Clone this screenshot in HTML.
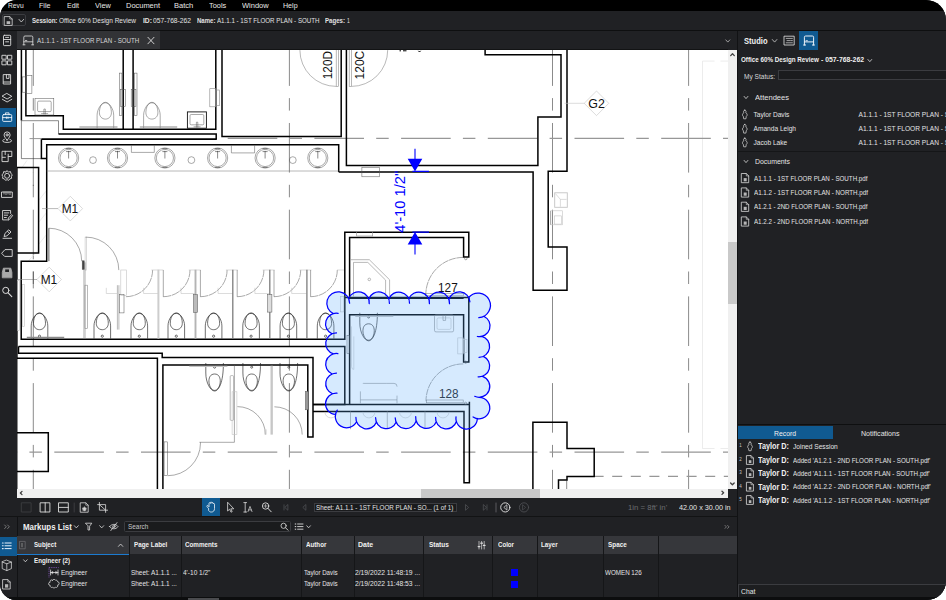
<!DOCTYPE html>
<html lang="en"><head><meta charset="utf-8"><title>Revu - A1.1.1 - 1ST FLOOR PLAN - SOUTH</title>
<style>
html,body{margin:0;padding:0;background:#fff}
body{width:946px;height:600px;overflow:hidden;font-family:"Liberation Sans",sans-serif}
#app{position:absolute;left:0;top:0;width:946px;height:600px;background:#202124;border-radius:17px 20px 19px 16px;overflow:hidden}
.a{position:absolute}
.t{position:absolute;white-space:nowrap;line-height:1;transform-origin:0 50%}
svg{position:absolute;overflow:visible}
</style></head><body><div id="app">
<!-- menu bar -->
<div class="a" style="left:0;top:0;width:946px;height:11px;background:#000"></div>
<!-- toolbar -->
<div class="a" style="left:0;top:11px;width:946px;height:19px;background:#202124"></div>
<div class="a" style="left:0;top:30px;width:946px;height:1.2px;background:#0e0f10"></div>
<div class="a" style="left:1.5px;top:14.2px;width:24.6px;height:12.2px;border:0.8px solid #3b3c40;border-radius:2px;box-sizing:border-box"></div>
<!-- tab bar -->
<div class="a" style="left:17px;top:31px;width:721px;height:18.6px;background:#202124"></div>
<div class="a" style="left:17px;top:30.9px;width:143.1px;height:18px;background:#323336"></div>
<div class="a" style="left:17px;top:48.6px;width:711px;height:1.2px;background:#121314"></div>
<!-- left sidebar -->
<div class="a" style="left:0;top:31px;width:17px;height:569px;background:#202124"></div>
<div class="a" style="left:0;top:108.3px;width:16.4px;height:19.2px;background:#105a91"></div>
<div class="a" style="left:0;top:536.6px;width:16.5px;height:19.3px;background:#105a91"></div>
<div class="a" style="left:16.6px;top:498px;width:0.8px;height:102px;background:#111214"></div>
<!-- drawing viewport -->
<div class="a" style="left:17px;top:49.6px;width:711px;height:439px;background:#fff;overflow:hidden">
<svg width="711" height="439" viewBox="17 49.6 711 439" style="left:0;top:0" font-family="Liberation Sans, sans-serif">
<defs><style>
.k{fill:none;stroke:#000;stroke-width:1.5;stroke-linejoin:miter}
.k2{fill:none;stroke:#000;stroke-width:2}
.m{fill:none;stroke:#111;stroke-width:0.9}
.n{fill:none;stroke:#2a2a2a;stroke-width:0.55}
.q{fill:none;stroke:#222;stroke-width:0.65}
.f{fill:none;stroke:#555;stroke-width:0.5}
.g{fill:none;stroke:#8a8a8a;stroke-width:0.6}
.l{fill:none;stroke:#c4c4c4;stroke-width:0.6}
.v{fill:none;stroke:#e4e4e4;stroke-width:0.7}
.b{fill:none;stroke:#0000ff;stroke-width:1.1}
</style></defs>
<path class="v" d="M702.5 60.7V448.1"/>
<path class="v" d="M702.5 60.7H728M702.5 448.1H728" stroke-dasharray="12 6"/>
<path class="n" d="M33.3 35.9V489" stroke-dasharray="49.6 12.2 12.5 12.4"/>
<path class="n" d="M289.4 35.9V489" stroke-dasharray="49.6 12.2 12.5 12.4"/>
<path class="n" d="M552.5 35.9V489" stroke-dasharray="49.6 12.2 12.5 12.4"/>
<path class="n" d="M688.6 35.9V489" stroke-dasharray="49.6 12.2 12.5 12.4"/>
<path class="n" d="M33.3 172V185.5"/>
<path class="g" d="M227.7 138H728" stroke-dasharray="49.6 12.2 12.5 12.4" style="stroke-width:1.25;stroke:#979797"/>
<path class="g" d="M-32.4 451.6H728" stroke-dasharray="49.6 12.2 12.5 12.4" style="stroke-width:1.25;stroke:#979797"/>
<path class="g" d="M593.6 475.9H728" stroke-dasharray="10 8.6" style="stroke-width:1.25;stroke:#979797"/>
<path class="g" d="M29.5 138.2H41.4" style="stroke-width:0.9"/>
<path class="v" d="M38.6 200L46.7 190M38.6 222L46.7 212M38.6 244L46.7 234M21.4 168L27 160M27 262L38 250"/>
<path class="k" d="M21.4 49V120.2"/>
<path class="n" d="M21.4 120.2V158.2H41.4M21.4 120.3H58.5V133.5"/>
<path class="k" d="M25.9 49V115.3H63.3V128.9H215.8V49M123.2 49V128.9M133.1 49V128.9"/>
<path class="k" d="M58.5 133.5H216.2V138.9"/>
<path class="k2" d="M216.8 138.7H41.4" style="stroke-width:1.8"/>
<path class="k" d="M41.4 138.9V158.2H46.6"/>
<path class="k" d="M338.7 171.5V144.3H46.7V260.8H21.2V338.8H344.8V231.9H468.8V256.6H463.6V237.1H349.6V297.9H463.6"/>
<path class="k" d="M16.9 167H38.6V252.5H16.9M16.9 167V358"/>
<path class="k" d="M222 49V136H341.2V49"/>
<path class="k" d="M338.7 171.5H533.1V289.9H567V246.6H548.2V170.9H567V49"/>
<path class="k" d="M346.4 49V165.2H537.9V116.6H561V54.3H485.1V49"/>
<path class="k" d="M344.8 297.2H468.8V361.6H463.6V314.4H349.6V403.6"/>
<path class="k" d="M18.5 346.1H344.8V404.2H313M18.5 346.1V352.9H162.2V357H313V436.5H307.8V364.6H162.9V489"/>
<path class="k" d="M16.9 357.9H157.4V489"/>
<path class="k" d="M313 404.2H469.4V482.3H464V411H313M469.4 401.3V404.2"/>
<path class="k" d="M16.9 432.4H48.3V471.1H16.9M16.7 358V489"/>
<path class="k" d="M532.9 489V421.9H567V448H594.2V476.1H567V479.5H558.5V489"/>
<path class="n" d="M566.7 479.5V489"/>
<path class="k" d="M399.5 50.4H401M403 50.4H406.5M418.4 50.4L419.5 51.6L420.6 50.4" style="stroke-width:1"/>
<rect class="f" x="22.3" y="76.5" width="3.6" height="15.3"/>
<rect class="f" x="25.9" y="75.3" width="6.0" height="17.7"/>
<rect class="f" x="35.0" y="98.1" width="18.8" height="16.5"/>
<rect class="f" x="37.6" y="100.7" width="13.6" height="10.5" rx="1.2"/>
<path class="f" d="M43.9 114.0V108.6H45.3V114.0M41.1 113.2H48.1"/>
<path class="f" d="M97.1 127.8V114.9C97.1 108.4 101.8 101.9 105.4 101.9C109.0 101.9 113.7 108.4 113.7 114.9V127.8"/>
<path class="f" d="M105.4 102.4C100.4 102.4 99.4 108.9 99.4 112.4C99.4 115.9 101.9 118.7 105.4 118.7C108.9 118.7 111.4 115.9 111.4 112.4C111.4 108.9 110.4 102.4 105.4 102.4Z"/>
<path class="g" d="M79.4 126.6H117.5" style="stroke-width:1.2"/>
<path class="f" d="M143.6 127.8V114.9C143.6 108.4 148.3 101.9 151.9 101.9C155.5 101.9 160.2 108.4 160.2 114.9V127.8"/>
<path class="f" d="M151.9 102.4C146.9 102.4 145.9 108.9 145.9 112.4C145.9 115.9 148.4 118.7 151.9 118.7C155.4 118.7 157.9 115.9 157.9 112.4C157.9 108.9 156.9 102.4 151.9 102.4Z"/>
<path class="g" d="M139.8 126.6H177.2" style="stroke-width:1.2"/>
<rect class="f" x="119.4" y="72.7" width="2.5" height="42.5"/>
<rect class="f" x="120.6" y="89.2" width="4.7" height="17.1"/>
<rect class="f" x="134.5" y="72.7" width="2.5" height="42.5"/>
<rect class="f" x="131.2" y="89.2" width="4.7" height="17.1"/>
<rect class="m" x="187.4" y="111.5" width="19.0" height="16.3"/>
<rect class="f" x="190.0" y="114.1" width="13.8" height="10.3" rx="1.2"/>
<path class="f" d="M196.4 127.2V121.8H197.8V127.2M193.6 126.4H200.6"/>
<rect class="g" x="209.8" y="88.3" width="5.9" height="18.1"/>
<rect class="g" x="215.7" y="89.6" width="3.8" height="15.7"/>
<circle class="f" cx="68.6" cy="157.6" r="10.1"/>
<circle class="f" cx="68.6" cy="157.6" r="8.6"/>
<path class="n" d="M68.6 150.4V158.1M66.1 151.2H71.1"/>
<path class="n" d="M66.1 167.0H71.1M66.1 148.2H71.1"/>
<circle class="f" cx="117.5" cy="157.6" r="10.1"/>
<circle class="f" cx="117.5" cy="157.6" r="8.6"/>
<path class="n" d="M117.5 150.4V158.1M115.0 151.2H120.0"/>
<path class="n" d="M115.0 167.0H120.0M115.0 148.2H120.0"/>
<circle class="f" cx="164.9" cy="157.6" r="10.1"/>
<circle class="f" cx="164.9" cy="157.6" r="8.6"/>
<path class="n" d="M164.9 150.4V158.1M162.4 151.2H167.4"/>
<path class="n" d="M162.4 167.0H167.4M162.4 148.2H167.4"/>
<circle class="f" cx="217.6" cy="157.6" r="10.1"/>
<circle class="f" cx="217.6" cy="157.6" r="8.6"/>
<path class="n" d="M217.6 150.4V158.1M215.1 151.2H220.1"/>
<path class="n" d="M215.1 167.0H220.1M215.1 148.2H220.1"/>
<circle class="f" cx="265.1" cy="157.6" r="10.1"/>
<circle class="f" cx="265.1" cy="157.6" r="8.6"/>
<path class="n" d="M265.1 150.4V158.1M262.6 151.2H267.6"/>
<path class="n" d="M262.6 167.0H267.6M262.6 148.2H267.6"/>
<circle class="f" cx="317.8" cy="157.6" r="10.1"/>
<circle class="f" cx="317.8" cy="157.6" r="8.6"/>
<path class="n" d="M317.8 150.4V158.1M315.3 151.2H320.3"/>
<path class="n" d="M315.3 167.0H320.3M315.3 148.2H320.3"/>
<circle class="f" cx="93.0" cy="159.7" r="3.4"/>
<circle class="f" cx="191.4" cy="159.7" r="3.4"/>
<circle class="f" cx="292.8" cy="159.7" r="3.4"/>
<path class="g" d="M46.7 170.6H338.7" style="stroke:#7d7d7d;stroke-width:0.55"/>
<path class="f" d="M131.4 145V152H154.3V145"/>
<path class="f" d="M231.4 145V152.5H254.6V145"/>
<rect class="f" x="361.9" y="167.3" width="17.5" height="9.1"/>
<rect class="g" x="356.7" y="230.9" width="16.0" height="4.7"/>
<rect class="g" x="336.2" y="49.0" width="2.3" height="37.0"/>
<rect class="g" x="349.2" y="49.0" width="2.2" height="37.0"/>
<path class="g" d="M336.2 86A36.3 36.3 0 0 1 299.9 49.7M351.4 86A36.3 36.3 0 0 0 387.7 49.7"/>
<text x="0.0" y="0.0" font-size="12" fill="#111" transform="translate(332.1 78.8) rotate(-90)" textLength="28.2" lengthAdjust="spacingAndGlyphs">120D</text>
<text x="0.0" y="0.0" font-size="12" fill="#111" transform="translate(363.8 79) rotate(-90)" textLength="28.6" lengthAdjust="spacingAndGlyphs">120C</text>
<path class="l" d="M584.2 102.9L596.5 90.6L608.8 102.9L596.5 115.2Z"/>
<path class="l" d="M564.5 102.9H584.4"/>
<text x="588.3" y="107.6" font-size="12.4" fill="#111" textLength="16.5" lengthAdjust="spacingAndGlyphs">G2</text>
<path class="l" d="M58.0 208.2L70.3 195.9L82.6 208.2L70.3 220.5Z"/>
<path class="g" d="M42.0 208.2H57.9"/>
<text x="61.7" y="212.7" font-size="12.4" fill="#111" textLength="16.5" lengthAdjust="spacingAndGlyphs">M1</text>
<path class="l" d="M36.9 279.1L49.2 266.8L61.5 279.1L49.2 291.4Z"/>
<path class="g" d="M16.0 279.1H37.0"/>
<text x="40.7" y="283.6" font-size="12.4" fill="#111" textLength="16.5" lengthAdjust="spacingAndGlyphs">M1</text>
<path class="n" d="M33.3 271V288"/>
<path class="g" d="M48.7 227.9V260.8" style="stroke-width:1.8;stroke:#9a9a9a"/>
<path class="f" d="M48.7 227.8A33 33 0 0 1 81.7 260.8"/>
<rect class="l" x="85.1" y="236.7" width="1.3" height="33.0"/>
<path class="f" d="M85.8 236.7A33 33 0 0 1 118.8 269.7"/>
<path class="g" d="M83.9 262V338.5M85.1 262V338.5"/>
<rect class="f" x="82.2" y="260.4" width="2.0" height="8.6" style="fill:#444"/>
<rect class="g" x="84.9" y="284.8" width="2.4" height="43.2"/>
<rect class="l" x="120.8" y="269.6" width="5.7" height="25.4"/>
<rect class="f" x="119.5" y="294.3" width="4.5" height="18.2"/>
<path class="g" d="M117.4 284.8V329.2M118.9 284.8V329.2"/>
<path class="l" d="M106.3 287.4V293.1H118.1"/>
<path class="f" d="M125.9 296.3A26.7 26.7 0 0 0 152.6 269.6" stroke-dasharray="8 0.6"/>
<path class="l" d="M151.4 269.6H163.3"/>
<path class="l" d="M143.6 287.4V293.1H158.4"/>
<path class="f" d="M163.3 269.6V296.4"/>
<path class="f" d="M163.3 296.3A26.7 26.7 0 0 0 190.0 269.6" stroke-dasharray="8 0.6"/>
<path class="l" d="M188.8 269.6H200.7"/>
<path class="l" d="M181.0 287.4V293.1H195.8"/>
<path class="f" d="M200.4 269.6V296.4"/>
<path class="f" d="M200.4 296.3A26.7 26.7 0 0 0 227.1 269.6" stroke-dasharray="8 0.6"/>
<path class="l" d="M225.9 269.6H237.8"/>
<path class="l" d="M218.1 287.4V293.1H232.9"/>
<path class="f" d="M237.2 269.6V296.4"/>
<path class="f" d="M237.2 296.3A26.7 26.7 0 0 0 263.9 269.6" stroke-dasharray="8 0.6"/>
<path class="l" d="M262.7 269.6H274.6"/>
<path class="l" d="M254.9 287.4V293.1H269.7"/>
<path class="f" d="M274.0 269.6V296.4"/>
<path class="f" d="M274.0 296.3A26.7 26.7 0 0 0 300.7 269.6" stroke-dasharray="8 0.6"/>
<path class="l" d="M299.5 269.6H311.4"/>
<path class="l" d="M291.7 287.4V293.1H306.5"/>
<path class="f" d="M310.6 269.6V296.4"/>
<path class="f" d="M310.6 296.3A26.7 26.7 0 0 0 337.3 269.6" stroke-dasharray="8 0.6"/>
<path class="l" d="M337 269.6H344"/>
<path class="g" d="M158.4 269.3V338.2" style="stroke:#cdcdcd;stroke-width:2"/>
<path class="g" d="M195.5 269.3V338.2" style="stroke:#b4b4b4;stroke-width:1.9"/>
<path class="g" d="M232.8 269.3V338.2" style="stroke:#7c7c7c;stroke-width:1.3"/>
<path class="g" d="M269.8 269.3V338.2" style="stroke:#7c7c7c;stroke-width:1.3"/>
<path class="g" d="M306.9 269.3V338.2" style="stroke:#7c7c7c;stroke-width:1.3"/>
<rect class="f" x="193.5" y="294.3" width="4.1" height="17.8" style="fill:#bbb"/>
<rect class="f" x="267.6" y="294.3" width="4.3" height="17.4" style="fill:#ddd"/>
<path class="q" d="M31.2 338.2V325.5C31.2 319.0 35.9 312.5 39.5 312.5C43.1 312.5 47.8 319.0 47.8 325.5V338.2"/>
<path class="q" d="M39.5 313.0C34.5 313.0 33.5 319.5 33.5 323.0C33.5 326.5 36.0 329.3 39.5 329.3C43.0 329.3 45.5 326.5 45.5 323.0C45.5 319.5 44.5 313.0 39.5 313.0Z"/>
<circle class="q" cx="39.5" cy="335.8" r="1.1"/>
<path class="q" d="M94.0 338.2V325.5C94.0 319.0 98.7 312.5 102.3 312.5C105.9 312.5 110.6 319.0 110.6 325.5V338.2"/>
<path class="q" d="M102.3 313.0C97.3 313.0 96.3 319.5 96.3 323.0C96.3 326.5 98.8 329.3 102.3 329.3C105.8 329.3 108.3 326.5 108.3 323.0C108.3 319.5 107.3 313.0 102.3 313.0Z"/>
<circle class="q" cx="102.3" cy="335.8" r="1.1"/>
<path class="q" d="M131.0 338.2V325.5C131.0 319.0 135.7 312.5 139.3 312.5C142.9 312.5 147.6 319.0 147.6 325.5V338.2"/>
<path class="q" d="M139.3 313.0C134.3 313.0 133.3 319.5 133.3 323.0C133.3 326.5 135.8 329.3 139.3 329.3C142.8 329.3 145.3 326.5 145.3 323.0C145.3 319.5 144.3 313.0 139.3 313.0Z"/>
<circle class="q" cx="139.3" cy="335.8" r="1.1"/>
<path class="q" d="M168.0 338.2V325.5C168.0 319.0 172.7 312.5 176.3 312.5C179.9 312.5 184.6 319.0 184.6 325.5V338.2"/>
<path class="q" d="M176.3 313.0C171.3 313.0 170.3 319.5 170.3 323.0C170.3 326.5 172.8 329.3 176.3 329.3C179.8 329.3 182.3 326.5 182.3 323.0C182.3 319.5 181.3 313.0 176.3 313.0Z"/>
<circle class="q" cx="176.3" cy="335.8" r="1.1"/>
<path class="q" d="M205.3 338.2V325.5C205.3 319.0 210.0 312.5 213.6 312.5C217.2 312.5 221.9 319.0 221.9 325.5V338.2"/>
<path class="q" d="M213.6 313.0C208.6 313.0 207.6 319.5 207.6 323.0C207.6 326.5 210.1 329.3 213.6 329.3C217.1 329.3 219.6 326.5 219.6 323.0C219.6 319.5 218.6 313.0 213.6 313.0Z"/>
<circle class="q" cx="213.6" cy="335.8" r="1.1"/>
<path class="q" d="M242.8 338.2V325.5C242.8 319.0 247.5 312.5 251.1 312.5C254.7 312.5 259.4 319.0 259.4 325.5V338.2"/>
<path class="q" d="M251.1 313.0C246.1 313.0 245.1 319.5 245.1 323.0C245.1 326.5 247.6 329.3 251.1 329.3C254.6 329.3 257.1 326.5 257.1 323.0C257.1 319.5 256.1 313.0 251.1 313.0Z"/>
<circle class="q" cx="251.1" cy="335.8" r="1.1"/>
<path class="q" d="M280.1 338.2V325.5C280.1 319.0 284.8 312.5 288.4 312.5C292.0 312.5 296.7 319.0 296.7 325.5V338.2"/>
<path class="q" d="M288.4 313.0C283.4 313.0 282.4 319.5 282.4 323.0C282.4 326.5 284.9 329.3 288.4 329.3C291.9 329.3 294.4 326.5 294.4 323.0C294.4 319.5 293.4 313.0 288.4 313.0Z"/>
<circle class="q" cx="288.4" cy="335.8" r="1.1"/>
<path class="q" d="M317.3 338.2V325.5C317.3 319.0 322.0 312.5 325.6 312.5C329.2 312.5 333.9 319.0 333.9 325.5V338.2"/>
<path class="q" d="M325.6 313.0C320.6 313.0 319.6 319.5 319.6 323.0C319.6 326.5 322.1 329.3 325.6 329.3C329.1 329.3 331.6 326.5 331.6 323.0C331.6 319.5 330.6 313.0 325.6 313.0Z"/>
<circle class="q" cx="325.6" cy="335.8" r="1.1"/>
<path class="g" d="M26.8 337H64.2" style="stroke-width:1.3"/>
<rect class="l" x="17.5" y="280.0" width="2.0" height="50.0"/>
<rect class="l" x="22.5" y="284.0" width="2.0" height="42.0"/>
<path class="g" d="M350.8 259.3H369.3L389.6 279.4V296M353.5 296V262H367.8L385.6 279.7V296"/>
<circle class="g" cx="369.3" cy="279.0" r="1.3"/>
<circle class="f" cx="465.8" cy="258.2" r="1.2"/>
<path class="f" d="M463.3 257A37.5 37.5 0 0 0 425.8 294.5" stroke-dasharray="7 0.6"/>
<rect class="g" x="425.5" y="293.0" width="37.8" height="2.4"/>
<text x="438.1" y="291.3" font-size="12" fill="#111" textLength="19.6" lengthAdjust="spacingAndGlyphs">127</text>
<path class="q" d="M205.8 362.6V372.6C205.8 382.6 210.6 390.6 214.6 390.6C218.6 390.6 223.4 382.6 223.4 362.6"/>
<path class="q" d="M214.6 373.6C205.6 373.6 208.6 390.0 214.6 390.0C220.6 390.0 223.6 373.6 214.6 373.6Z"/>
<circle class="q" cx="214.6" cy="366.8" r="1.0"/>
<path class="q" d="M242.9 362.6V372.6C242.9 382.6 247.7 390.6 251.7 390.6C255.7 390.6 260.5 382.6 260.5 362.6"/>
<path class="q" d="M251.7 373.6C242.7 373.6 245.7 390.0 251.7 390.0C257.7 390.0 260.7 373.6 251.7 373.6Z"/>
<circle class="q" cx="251.7" cy="366.8" r="1.0"/>
<path class="q" d="M280.0 362.6V372.6C280.0 382.6 284.8 390.6 288.8 390.6C292.8 390.6 297.6 382.6 297.6 362.6"/>
<path class="q" d="M288.8 373.6C279.8 373.6 282.8 390.0 288.8 390.0C294.8 390.0 297.8 373.6 288.8 373.6Z"/>
<circle class="q" cx="288.8" cy="366.8" r="1.0"/>
<path class="l" d="M189.3 366H227.4" style="stroke-width:1.2"/>
<path class="f" d="M234.4 364.6V441.9H199.4"/>
<path class="g" d="M271.1 364.6V434.2M272.2 364.6V434.2"/>
<rect class="g" x="230.2" y="375.2" width="3.4" height="44.8" rx="1"/>
<rect class="l" x="232.1" y="391.4" width="4.8" height="42.8"/>
<path class="f" d="M237.4 406.2A28 28 0 0 1 265.4 434.2M274.4 406.4A27.8 27.8 0 0 1 302.2 434.2"/>
<path class="l" d="M265 429V434.2M266.2 429V434.2"/>
<rect class="f" x="305.4" y="391.0" width="2.8" height="18.4" style="fill:#999"/>
<rect class="f" x="164.1" y="441.5" width="3.6" height="33.8"/>
<path class="f" d="M167.7 475.3A32.8 32.8 0 0 0 200.5 442.5V441.9"/>
<path class="g" d="M350.5 411V428.8"/>
<path class="g" d="M387.3 411V428.8"/>
<path class="g" d="M425 411V428.8"/>
<path class="l" d="M324.9 411.5A6 6 0 0 0 336.9 411.5"/>
<path class="l" d="M362.9 411.5A6 6 0 0 0 374.9 411.5"/>
<path class="l" d="M399.5 411.5A6 6 0 0 0 411.5 411.5"/>
<path class="l" d="M437 411.5A6 6 0 0 0 449 411.5"/>
<path class="q" d="M359.8 312.4V322.4C359.8 332.4 364.6 340.4 368.6 340.4C372.6 340.4 377.4 332.4 377.4 312.4"/>
<path class="q" d="M368.6 323.4C359.6 323.4 362.6 339.8 368.6 339.8C374.6 339.8 377.6 323.4 368.6 323.4Z"/>
<circle class="q" cx="368.6" cy="316.6" r="1.0"/>
<path class="l" d="M355.3 316H393.3" style="stroke-width:1.2"/>
<rect class="f" x="347.0" y="335.3" width="2.2" height="17.7"/>
<path class="l" d="M351.5 326V366Q351.5 369 353.8 369V336"/>
<rect class="l" x="340.6" y="296.0" width="3.2" height="15.5"/>
<rect class="g" x="434.5" y="314.5" width="19.1" height="17.0" rx="1.5"/>
<rect class="l" x="437.0" y="317.5" width="14.0" height="11.5" rx="1.5"/>
<path class="g" d="M443 315V320H445.6V315"/>
<rect class="l" x="457.8" y="337.5" width="5.7" height="16.0"/>
<rect class="l" x="463.5" y="339.0" width="3.5" height="13.0"/>
<path class="f" d="M463.3 363.5A37.3 37.3 0 0 0 426 400.8" stroke-dasharray="7 0.6"/>
<rect class="g" x="426.4" y="399.6" width="36.8" height="2.8"/>
<circle class="f" cx="465.6" cy="361.8" r="1.2"/>
<circle class="f" cx="465.6" cy="403.0" r="1.2"/>
<text x="439.0" y="397.2" font-size="12" fill="#222" textLength="19.6" lengthAdjust="spacingAndGlyphs">128</text>
<path class="g" d="M360.4 403V386A3 3 0 0 1 363.4 383H394A3 3 0 0 1 397 386V403" stroke-dasharray="12 9 24 0"/>
<path class="g" d="M360.4 399.5H397"/>
<rect class="l" x="554.7" y="192.4" width="12.6" height="14.5" style="stroke-width:0.9"/>
<path class="l" d="M555.4 193.2L560.4 199H566.6M560.4 199V206.3"/>
<rect class="l" x="550.9" y="210.4" width="11.4" height="14.0"/>
<rect class="l" x="554.6" y="215.5" width="7.0" height="8.2"/>
<path class="g" d="M550.5 210.4V224.4"/>
<path class="b" d="M415 148.3V160M415 254.2V243M412.4 171H429M412.4 231.7H429"/>
<path d="M407.7 158.3H422.3L415 171ZM407.7 244.2H422.3L415 231.7Z" fill="#0000ff"/>
<text x="0.0" y="0.0" font-size="14.2" fill="#0000ff" transform="translate(405 232.4) rotate(-90)" textLength="62" lengthAdjust="spacingAndGlyphs">4'-10 1/2"</text>
<path d="M336.4 302.3H479.1V417.5H336.4ZM326.8 302.8A11.4 11.4 0 1 1 349.6 302.8A11.4 11.4 0 1 1 326.8 302.8ZM347.8 302.3A10.7 10.7 0 1 1 369.2 302.3A10.7 10.7 0 1 1 347.8 302.3ZM368.0 302.3A10.7 10.7 0 1 1 389.4 302.3A10.7 10.7 0 1 1 368.0 302.3ZM388.1 302.3A10.7 10.7 0 1 1 409.5 302.3A10.7 10.7 0 1 1 388.1 302.3ZM408.0 302.3A10.7 10.7 0 1 1 429.4 302.3A10.7 10.7 0 1 1 408.0 302.3ZM428.2 302.3A10.7 10.7 0 1 1 449.6 302.3A10.7 10.7 0 1 1 428.2 302.3ZM448.5 302.3A10.7 10.7 0 1 1 469.9 302.3A10.7 10.7 0 1 1 448.5 302.3ZM465.8 304.9A12.3 12.3 0 1 1 490.4 304.9A12.3 12.3 0 1 1 465.8 304.9ZM468.4 325.5A10.7 10.7 0 1 1 489.8 325.5A10.7 10.7 0 1 1 468.4 325.5ZM468.4 346.2A10.7 10.7 0 1 1 489.8 346.2A10.7 10.7 0 1 1 468.4 346.2ZM468.4 365.8A10.7 10.7 0 1 1 489.8 365.8A10.7 10.7 0 1 1 468.4 365.8ZM468.4 386.1A10.7 10.7 0 1 1 489.8 386.1A10.7 10.7 0 1 1 468.4 386.1ZM468.4 407.6A10.7 10.7 0 1 1 489.8 407.6A10.7 10.7 0 1 1 468.4 407.6ZM455.9 417.5A10.7 10.7 0 1 1 477.3 417.5A10.7 10.7 0 1 1 455.9 417.5ZM435.6 417.5A10.7 10.7 0 1 1 457.0 417.5A10.7 10.7 0 1 1 435.6 417.5ZM415.6 417.5A10.7 10.7 0 1 1 437.0 417.5A10.7 10.7 0 1 1 415.6 417.5ZM395.2 417.5A10.7 10.7 0 1 1 416.6 417.5A10.7 10.7 0 1 1 395.2 417.5ZM375.6 417.5A10.7 10.7 0 1 1 397.0 417.5A10.7 10.7 0 1 1 375.6 417.5ZM355.9 417.5A10.7 10.7 0 1 1 377.3 417.5A10.7 10.7 0 1 1 355.9 417.5ZM335.3 416.2A11.3 11.3 0 1 1 357.9 416.2A11.3 11.3 0 1 1 335.3 416.2ZM325.7 403.4A10.7 10.7 0 1 1 347.1 403.4A10.7 10.7 0 1 1 325.7 403.4ZM325.7 383.4A10.7 10.7 0 1 1 347.1 383.4A10.7 10.7 0 1 1 325.7 383.4ZM325.7 363.8A10.7 10.7 0 1 1 347.1 363.8A10.7 10.7 0 1 1 325.7 363.8ZM325.7 343.2A10.7 10.7 0 1 1 347.1 343.2A10.7 10.7 0 1 1 325.7 343.2ZM325.7 323.6A10.7 10.7 0 1 1 347.1 323.6A10.7 10.7 0 1 1 325.7 323.6Z" fill="rgba(91,171,251,0.25)" fill-rule="nonzero"/>
<path d="M333.7 313.3A11.4 11.4 0 1 1 349.6 302.8M348.6 298.2A10.7 10.7 0 0 1 369.2 303.2M368.6 298.8A10.7 10.7 0 0 1 389.4 303.0M388.8 298.6A10.7 10.7 0 0 1 409.5 302.8M408.8 298.4A10.7 10.7 0 0 1 429.4 303.2M428.8 298.8A10.7 10.7 0 0 1 449.5 303.3M449.0 298.9A10.7 10.7 0 0 1 469.9 301.4M468.6 297.1A12.3 12.3 0 1 1 478.8 317.2M483.7 315.8A10.7 10.7 0 0 1 477.4 336.1M481.8 335.9A10.7 10.7 0 0 1 479.0 356.9M483.4 356.0A10.7 10.7 0 0 1 478.1 376.4M482.5 376.0A10.7 10.7 0 1 1 474.7 395.9M479.1 396.9A10.7 10.7 0 1 1 473.1 416.5M477.3 418.1A10.7 10.7 0 1 1 456.0 416.5M456.5 420.9A10.7 10.7 0 0 1 435.6 416.9M436.3 421.3A10.7 10.7 0 0 1 415.7 416.3M416.1 420.7A10.7 10.7 0 0 1 395.2 417.4M396.1 421.8A10.7 10.7 0 0 1 375.6 417.3M376.5 421.7A10.7 10.7 0 0 1 355.9 417.0M356.6 421.4A11.3 11.3 0 1 1 337.3 409.7M335.5 414.1A10.7 10.7 0 0 1 337.0 392.7M332.6 393.4A10.7 10.7 0 0 1 336.5 372.7M332.1 373.6A10.7 10.7 0 0 1 337.9 353.2M333.5 353.5A10.7 10.7 0 0 1 336.5 332.5M332.1 333.4A10.7 10.7 0 0 1 338.1 313.0" fill="none" stroke="#0000ff" stroke-width="1.25" stroke-linecap="round"/>
</svg>
</div>
<!-- scrollbars -->
<div class="a" style="left:728px;top:49.6px;width:10px;height:439px;background:#f0f0f0"></div>
<div class="a" style="left:728px;top:242.3px;width:9.4px;height:61.3px;background:#c9c9c9"></div>
<div class="a" style="left:17px;top:488.6px;width:721px;height:9.2px;background:#f0f0f0"></div>
<div class="a" style="left:420.8px;top:489.4px;width:119.2px;height:8.4px;background:#c9c9c9"></div>
<div class="a" style="left:728px;top:488.6px;width:9.4px;height:9.2px;background:#202124"></div>
<!-- bottom toolbar -->
<div class="a" style="left:17px;top:497.8px;width:721px;height:18.6px;background:#202124"></div>
<div class="a" style="left:202.2px;top:498.2px;width:18px;height:18.2px;background:#105a91"></div>
<div class="a" style="left:0;top:516.4px;width:738px;height:1px;background:#121314"></div>
<div class="a" style="left:314px;top:502.8px;width:142.8px;height:9.4px;border:0.7px solid #3b3c40;box-sizing:border-box;background:#1a1b1d"></div>
<!-- markups header row -->
<div class="a" style="left:124.4px;top:521px;width:167px;height:10.6px;border:0.7px solid #3b3c40;border-radius:1.5px;box-sizing:border-box;background:#1a1b1d"></div>
<!-- table header -->
<div class="a" style="left:17.4px;top:536px;width:720.6px;height:18.4px;background:#36373b"></div>
<div class="a" style="left:17.4px;top:553.6px;width:111.6px;height:1.2px;background:#1c7bd0"></div>
<div class="a" style="left:129px;top:536px;width:0.9px;height:64px;background:#151618"></div>
<div class="a" style="left:180.5px;top:536px;width:0.9px;height:64px;background:#151618"></div>
<div class="a" style="left:301px;top:536px;width:0.9px;height:64px;background:#151618"></div>
<div class="a" style="left:353.8px;top:536px;width:0.9px;height:64px;background:#151618"></div>
<div class="a" style="left:423.4px;top:536px;width:0.9px;height:64px;background:#151618"></div>
<div class="a" style="left:492.2px;top:536px;width:0.9px;height:64px;background:#151618"></div>
<div class="a" style="left:536.8px;top:536px;width:0.9px;height:64px;background:#151618"></div>
<div class="a" style="left:603.3px;top:536px;width:0.9px;height:64px;background:#151618"></div>
<div class="a" style="left:658.4px;top:536px;width:0.9px;height:64px;background:#151618"></div>
<div class="a" style="left:510.8px;top:568.8px;width:7px;height:7px;background:#0000ff"></div>
<div class="a" style="left:510.8px;top:580.5px;width:7px;height:7px;background:#0000ff"></div>
<!-- right panel -->
<div class="a" style="left:738px;top:31px;width:208px;height:569px;background:#202124"></div>
<div class="a" style="left:737.4px;top:31px;width:0.9px;height:569px;background:#111214"></div>
<div class="a" style="left:799.2px;top:31.2px;width:19.2px;height:19.2px;background:#105a91"></div>
<div class="a" style="left:778px;top:70.2px;width:180px;height:9.8px;border:0.7px solid #3b3c40;box-sizing:border-box;background:#1b1c1e"></div>
<div class="a" style="left:738px;top:151px;width:208px;height:1px;background:#151618"></div>
<div class="a" style="left:738px;top:423.6px;width:208px;height:1.2px;background:#0e0f10"></div>
<div class="a" style="left:738px;top:426px;width:95px;height:13.4px;background:#105a91"></div>
<div class="a" style="left:738px;top:584.3px;width:208px;height:13px;background:#1d1e20;border-top:0.8px solid #3b3c40;border-left:0.8px solid #3b3c40;box-sizing:border-box"></div>
<!-- bottom strip -->
<div class="a" style="left:0;top:597.4px;width:946px;height:3px;background:#0c0d0e"></div>
<div class="a" style="left:188px;top:597.6px;width:31px;height:2.4px;background:#4a4b4e"></div>
<svg width="946" height="600" viewBox="0 0 946 600" style="left:0;top:0;pointer-events:none" fill="none" stroke="#dcdcdc" stroke-width="0.9" stroke-linecap="round" stroke-linejoin="round">
<path d="M4.6 16.6H9.8L12.2 19.0V25.4H4.6Z" stroke="#dcdcdc" stroke-width="0.8"/>
<path d="M9.8 16.6V19.0H12.2" stroke="#dcdcdc" stroke-width="0.6"/>
<rect x="6.6" y="21.2" width="3.6" height="2.8" fill="#dcdcdc" stroke="none" opacity="0.8"/>
<path d="M19.0 19.4L21.3 22.0L23.6 19.4" stroke="#dcdcdc" stroke-width="0.8"/>
<path d="M23.8 44.8V37.2Q23.8 36.0 25.0 36.0H31.6Q32.8 36.0 32.8 37.2V44.8M23.8 41.8H32.8M23.0 44.8H25.0M31.6 44.8H33.6" stroke="#cfcfcf" stroke-width="0.9"/>
<path d="M25.4 40.6H26.8" stroke="#cfcfcf" stroke-width="0.9"/>
<path d="M147.9 37.3L154 43.8M154 37.3L147.9 43.8" stroke="#e6e6e6" stroke-width="0.85"/>
<path d="M725.8 39.9L727.8 42.1L729.8 39.9" stroke="#bdbdbd" stroke-width="0.8"/>
<rect x="3.5" y="35.3" width="7.2" height="10.3" rx="0.8"/><path d="M3.5 39.5H10.7M5.6 37.4H8.6M5.6 41.8H8.6"/>
<rect x="2.3" y="55.3" width="3.9" height="3.9"/><rect x="7.9" y="55.3" width="3.9" height="3.9"/><rect x="2.3" y="60.9" width="3.9" height="3.9"/><rect x="7.9" y="60.9" width="3.9" height="3.9"/>
<path d="M3.6 74.6H10.6V84H3.6ZM3.6 82H10.6M6.4 74.6V78.4H9V74.6"/>
<path d="M7.1 93.6L11.8 96.3L7.1 99L2.4 96.3ZM2.4 99.3L7.1 102L11.8 99.3"/>
<rect x="2.7" y="114.6" width="9" height="6.8" rx="0.8" stroke="#eef4fa"/><path d="M5.4 114.6V112.9H9V114.6M2.7 117.6H11.7M6.4 117V118.4M8 117V118.4" stroke="#eef4fa"/>
<path d="M7.1 140.3C5 137.6 4.1 136.2 4.1 134.9A3 3 0 0 1 10.1 134.9C10.1 136.2 9.2 137.6 7.1 140.3Z"/><circle cx="7.1" cy="134.9" r="1.1"/><path d="M4.4 139.3C2.6 139.9 2.2 140.8 3 141.5C4.6 142.8 9.6 142.8 11.2 141.5C12 140.8 11.6 139.9 9.8 139.3"/>
<path d="M2.4 151.3H11.8V156.5H8.2V161.6H2.4ZM5.2 151.3V154.6M2.4 157.3H5.4M8.2 154.2V156.5" />
<circle cx="7.1" cy="175.8" r="2.5"/><path d="M7.1 170.9L8.6 172L10.5 171.6L10.9 173.5L12.3 174.8L11.4 176.4L11.6 178.3L9.8 178.9L8.6 180.4L7.1 179.6L5.6 180.4L4.4 178.9L2.6 178.3L2.8 176.4L1.9 174.8L3.3 173.5L3.7 171.6L5.6 172Z"/>
<rect x="1.9" y="192" width="10.4" height="5.4"/><path d="M4 192V194M6 192V194.6M8 192V194M10 192V194.6" stroke-width="0.7"/>
<path d="M10.6 213.4V210.5H2.6V219.9H7M4.4 212.9H8.8M4.4 215.2H7.6M4.4 217.5H6.4M8 219.9L8.4 218L11.6 214.6L12.6 215.6L9.6 219.2Z"/>
<path d="M3 238.3H11.6M4.2 236.2L5 233.4L8.8 229.8L11 232L7.2 235.6ZM7.4 231.2L9.6 233.4" />
<path d="M1.9 253L5 249.6H12.2V256.4H5Z"/>
<path d="M2.3 277.4V272.4L3.4 268.2H10.8L11.9 272.4V277.4Z" fill="#a9a9a9" stroke="#a9a9a9"/><rect x="5.2" y="269.4" width="3.8" height="2.6" fill="#202124" stroke="none"/>
<circle cx="5.8" cy="290.4" r="3.1" stroke-width="1"/><path d="M8.1 292.8L11.8 296.6" stroke-width="1.1"/>
<path d="M4.6 525L6.3 526.8L4.6 528.6M7.6 525L9.3 526.8L7.6 528.6" stroke="#9a9a9a" stroke-width="0.7"/>
<path d="M5 543H11.2M5 545.8H11.2M5 548.6H11.2" stroke="#e8f2fc" stroke-width="1"/><path d="M2.4 543H3.2M2.4 545.8H3.2M2.4 548.6H3.2" stroke="#e8f2fc" stroke-width="1.1"/>
<path d="M6.8 560.2L11.4 562V568.6L6.8 570.6L2.2 568.6V562ZM2.2 562L6.8 563.8L11.4 562M6.8 563.8V570.6" stroke-width="0.75"/>
<path d="M3.0 579.6H7.8L10.2 582.0V589.0H3.0Z" stroke="#dcdcdc" stroke-width="0.8"/>
<path d="M7.8 579.6V582.0H10.2" stroke="#dcdcdc" stroke-width="0.6"/>
<rect x="5.0" y="584.2" width="3.2" height="3.4" fill="#dcdcdc" stroke="none" opacity="0.8"/>
<rect x="21.7" y="502.8" width="9.4" height="9.2" stroke="#3c3d41"/>
<rect x="40.5" y="502.8" width="9.4" height="9.2"/><path d="M45.2 502.8V512"/>
<rect x="58.9" y="502.8" width="9.4" height="9.2"/><path d="M58.9 507.4H68.3"/>
<path d="M74.2 503V512" stroke="#47484c" stroke-width="0.7"/>
<path d="M80.6 502.8H85.8L88.2 505.2V512.2H80.6Z" stroke="#dcdcdc" stroke-width="0.8"/>
<path d="M85.8 502.8V505.2H88.2" stroke="#dcdcdc" stroke-width="0.6"/>
<rect x="82.6" y="507.4" width="3.6" height="3.4" fill="#dcdcdc" stroke="none" opacity="0.8"/>
<path d="M82.4 508.8H86.4M84.4 506.8V510.8" stroke-width="0.7"/>
<path d="M99.4 502.4V510.2H107.6M97.6 504.6H105.6V512.4M99.4 504.6L105.6 510.2" stroke-width="0.8"/>
<path d="M208.6 508.6L207 506.6C206.4 505.8 207.4 505 208.2 505.8L209 506.8V503.4C209 502.4 210.4 502.4 210.4 503.4V502.8C210.4 501.8 211.8 501.8 211.8 502.8V503.2C211.8 502.3 213.2 502.3 213.2 503.3V504C213.2 503.2 214.5 503.2 214.5 504.2V508.6C214.5 510.6 213.4 512 211.6 512H210.8C209.8 512 209.2 511.2 208.6 510.4Z" stroke="#f2f6fa" stroke-width="0.8"/>
<path d="M227.6 502.6V511L229.6 509.2L231 512.2L232.2 511.6L230.8 508.8H233.4Z" stroke-width="0.8"/>
<path d="M243.8 502.6H246.6M245.2 502.6V512M243.8 512H246.6" stroke-width="0.8"/><path d="M248 511.6L250 506.4L252 511.6M248.7 509.9H251.3" stroke-width="0.7"/>
<circle cx="265.6" cy="506" r="3.2" stroke-width="0.9"/><path d="M268 508.4L271.2 511.8" stroke-width="1"/><path d="M264 506H267.2M265.6 504.4V507.6" stroke-width="0.6"/>
<path d="M284 504.8V510M287.6 504.8L284.8 507.4L287.6 510Z" stroke="#55565a" stroke-width="0.7"/>
<path d="M305.6 504.8L302.8 507.4L305.6 510Z" stroke="#55565a" stroke-width="0.7"/>
<path d="M465.8 504.8L468.6 507.4L465.8 510Z" stroke="#55565a" stroke-width="0.7"/>
<path d="M487 504.8V510M483.6 504.8L486.4 507.4L483.6 510Z" stroke="#55565a" stroke-width="0.7"/>
<path d="M496 503V512" stroke="#6a6b6f" stroke-width="0.8"/>
<circle cx="505.3" cy="507.4" r="4.6" stroke="#e6e6e6"/><path d="M506.6 505L503.8 507.4L506.6 509.8Z" stroke="#e6e6e6" stroke-width="0.7"/>
<circle cx="524" cy="507.4" r="4.6" stroke="#4c4d51"/><path d="M522.8 505L525.6 507.4L522.8 509.8Z" stroke="#4c4d51" stroke-width="0.7"/>
<path d="M74.3 525.7L76.3 527.9L78.3 525.7" stroke="#dcdcdc" stroke-width="0.8"/>
<path d="M85.8 523.2H91.8L89.6 526.2V530H88V526.2Z" stroke-width="0.8"/>
<path d="M99.7 525.7L101.7 527.9L103.7 525.7" stroke="#dcdcdc" stroke-width="0.8"/>
<path d="M109.6 526.6C111.6 523.6 116 523.6 118 526.6C116 529.6 111.6 529.6 109.6 526.6ZM117 522.6L110.8 530.6" stroke-width="0.8"/><circle cx="113.8" cy="526.6" r="1.3" stroke-width="0.7"/>
<circle cx="283.6" cy="525.8" r="2.6" stroke-width="0.8"/><path d="M285.6 527.8L288 530.2" stroke-width="0.9"/>
<path d="M297.6 524H303M297.6 526.6H303M297.6 529.2H303" stroke-width="0.9"/><path d="M295.2 524H295.8M295.2 526.6H295.8M295.2 529.2H295.8" stroke-width="1"/>
<path d="M306.8 525.8L308.6 527.8L310.4 525.8" stroke="#dcdcdc" stroke-width="0.8"/>
<path d="M725 525.4L726.4 526.9L725 528.4M727.6 525.4L729 526.9L727.6 528.4" stroke="#a8a8a8" stroke-width="0.6"/>
<rect x="19.8" y="541.4" width="5.4" height="7.4" stroke="#7a7b7f" stroke-width="0.6"/><path d="M22 543.4V546.8" stroke="#9a9a9a" stroke-width="0.8"/>
<path d="M118.4 546.4L120.6 544L122.8 546.4" stroke-width="0.8"/>
<path d="M479 541.4V549M481.6 541.4V549M484.2 541.4V549" stroke-width="0.7"/><path d="M478.2 546.6H479.8M480.8 543.2H482.4M483.4 545.4H485" stroke-width="1.3"/>
<path d="M23.6 559.8L25.4 561.8L27.2 559.8" stroke="#dcdcdc" stroke-width="0.8"/>
<path d="M49 567.6H58.6M49 567.6V577.4" stroke="#9a63d6" stroke-width="0.8" stroke-dasharray="0.9 0.9" stroke-linecap="butt"/>
<path d="M50.6 570V575M58 570V575M50.6 572.5H58" stroke-width="0.8"/><path d="M51 572.5L53 571.3V573.7ZM57.6 572.5L55.6 571.3V573.7Z" fill="#dcdcdc" stroke-width="0.3"/>
<path d="M52.6 580.2A1.6 1.6 0 0 1 55.4 580.2A1.6 1.6 0 0 1 57.6 581.8A1.6 1.6 0 0 1 57.6 585A1.6 1.6 0 0 1 55.4 587.2A1.6 1.6 0 0 1 52.6 587.2A1.6 1.6 0 0 1 50.2 585.4A1.6 1.6 0 0 1 50.2 582.2A1.6 1.6 0 0 1 52.6 580.2Z" stroke-width="0.75"/>
<path d="M772.3 39.5L774.6 42.1L776.9 39.5" stroke="#cfcfcf" stroke-width="0.8"/>
<rect x="784.4" y="36.2" width="9.8" height="8.8" stroke-width="0.85"/><path d="M786.2 38.4H792.4M787 40.6H789.6M790.6 40.6H792.4M786.2 42.8H792.4" stroke-width="0.7"/>
<path d="M804.4 45.0V37.2Q804.4 36.0 805.6 36.0H812.4Q813.6 36.0 813.6 37.2V45.0M804.4 41.9H813.6M803.6 45.0H805.6M812.4 45.0H814.4" stroke="#eaf1f8" stroke-width="1"/>
<path d="M806.0 40.7H807.4" stroke="#eaf1f8" stroke-width="0.9"/>
<path d="M867.9 59.5L869.8 61.7L871.7 59.5" stroke="#dcdcdc" stroke-width="0.8"/>
<path d="M744.1 96.4L746.0 98.6L747.9 96.4" stroke="#dcdcdc" stroke-width="0.8"/>
<path d="M744.1 160.4L746.0 162.6L747.9 160.4" stroke="#dcdcdc" stroke-width="0.8"/>
<path d="M744.8 110.1C746.3 110.1 746.3 112.3 745.7 112.7C747.5 113.4 747.5 115.8 746.3 116.4L745.9 118.8H743.7L743.3 116.4C742.1 115.8 742.1 113.4 743.9 112.7C743.3 112.3 743.3 110.1 744.8 110.1Z" stroke="#dcdcdc" stroke-width="0.7"/>
<path d="M744.8 124.4C746.3 124.4 746.3 126.6 745.7 127.0C747.5 127.7 747.5 130.1 746.3 130.7L745.9 133.1H743.7L743.3 130.7C742.1 130.1 742.1 127.7 743.9 127.0C743.3 126.6 743.3 124.4 744.8 124.4Z" stroke="#dcdcdc" stroke-width="0.7"/>
<path d="M744.8 138.1C746.3 138.1 746.3 140.3 745.7 140.7C747.5 141.4 747.5 143.8 746.3 144.4L745.9 146.8H743.7L743.3 144.4C742.1 143.8 742.1 141.4 743.9 140.7C743.3 140.3 743.3 138.1 744.8 138.1Z" stroke="#dcdcdc" stroke-width="0.7"/>
<path d="M741.7 173.5H746.3L748.7 175.9V182.7H741.7Z" stroke="#dcdcdc" stroke-width="0.8"/>
<path d="M746.3 173.5V175.9H748.7" stroke="#dcdcdc" stroke-width="0.6"/>
<rect x="743.7" y="178.1" width="3.0" height="3.2" fill="#dcdcdc" stroke="none" opacity="0.8"/>
<path d="M741.7 187.9H746.3L748.7 190.3V197.1H741.7Z" stroke="#dcdcdc" stroke-width="0.8"/>
<path d="M746.3 187.9V190.3H748.7" stroke="#dcdcdc" stroke-width="0.6"/>
<rect x="743.7" y="192.5" width="3.0" height="3.2" fill="#dcdcdc" stroke="none" opacity="0.8"/>
<path d="M741.7 202.2H746.3L748.7 204.6V211.4H741.7Z" stroke="#dcdcdc" stroke-width="0.8"/>
<path d="M746.3 202.2V204.6H748.7" stroke="#dcdcdc" stroke-width="0.6"/>
<rect x="743.7" y="206.8" width="3.0" height="3.2" fill="#dcdcdc" stroke="none" opacity="0.8"/>
<path d="M741.7 216.9H746.3L748.7 219.3V226.1H741.7Z" stroke="#dcdcdc" stroke-width="0.8"/>
<path d="M746.3 216.9V219.3H748.7" stroke="#dcdcdc" stroke-width="0.6"/>
<rect x="743.7" y="221.5" width="3.0" height="3.2" fill="#dcdcdc" stroke="none" opacity="0.8"/>
<path d="M750.0 442.0C751.5 442.0 751.5 444.2 750.9 444.6C752.7 445.3 752.7 447.7 751.5 448.3L751.1 450.7H748.9L748.5 448.3C747.3 447.7 747.3 445.3 749.1 444.6C748.5 444.2 748.5 442.0 750.0 442.0Z" stroke="#dcdcdc" stroke-width="0.7"/>
<path d="M746.8 455.6H751.0L753.4 458.0V464.4H746.8Z" stroke="#dcdcdc" stroke-width="0.8"/>
<path d="M751.0 455.6V458.0H753.4" stroke="#dcdcdc" stroke-width="0.6"/>
<rect x="748.8" y="460.2" width="2.6" height="2.8" fill="#dcdcdc" stroke="none" opacity="0.8"/>
<path d="M746.8 468.6H751.0L753.4 471.0V477.4H746.8Z" stroke="#dcdcdc" stroke-width="0.8"/>
<path d="M751.0 468.6V471.0H753.4" stroke="#dcdcdc" stroke-width="0.6"/>
<rect x="748.8" y="473.2" width="2.6" height="2.8" fill="#dcdcdc" stroke="none" opacity="0.8"/>
<path d="M746.8 482.3H751.0L753.4 484.7V491.1H746.8Z" stroke="#dcdcdc" stroke-width="0.8"/>
<path d="M751.0 482.3V484.7H753.4" stroke="#dcdcdc" stroke-width="0.6"/>
<rect x="748.8" y="486.9" width="2.6" height="2.8" fill="#dcdcdc" stroke="none" opacity="0.8"/>
<path d="M746.8 495.6H751.0L753.4 498.0V504.4H746.8Z" stroke="#dcdcdc" stroke-width="0.8"/>
<path d="M751.0 495.6V498.0H753.4" stroke="#dcdcdc" stroke-width="0.6"/>
<rect x="748.8" y="500.2" width="2.6" height="2.8" fill="#dcdcdc" stroke="none" opacity="0.8"/>
<path d="M730.7 55.6L732.5 53.8L734.3 55.6M730.6 483L732.4 484.8L734.2 483M22 491.4L20.4 493L22 494.6M722 491.2L723.6 492.8L722 494.4" stroke="#404040" stroke-width="1.3"/>
</svg>
<div class="t" style="left:7.9px;top:2.19px;font-size:7.6px;color:#e9e9e9;transform:scaleX(0.8796);">Revu</div>
<div class="t" style="left:39.3px;top:2.19px;font-size:7.6px;color:#e9e9e9;transform:scaleX(0.9388);">File</div>
<div class="t" style="left:66.9px;top:2.19px;font-size:7.6px;color:#e9e9e9;transform:scaleX(0.9165);">Edit</div>
<div class="t" style="left:95.2px;top:2.19px;font-size:7.6px;color:#e9e9e9;transform:scaleX(0.9677);">View</div>
<div class="t" style="left:125.6px;top:2.19px;font-size:7.6px;color:#e9e9e9;transform:scaleX(0.9819);">Document</div>
<div class="t" style="left:174.2px;top:2.19px;font-size:7.6px;color:#e9e9e9;transform:scaleX(0.9937);">Batch</div>
<div class="t" style="left:209.1px;top:2.19px;font-size:7.6px;color:#e9e9e9;transform:scaleX(0.9755);">Tools</div>
<div class="t" style="left:241.6px;top:2.19px;font-size:7.6px;color:#e9e9e9;transform:scaleX(0.9846);">Window</div>
<div class="t" style="left:283.3px;top:2.19px;font-size:7.6px;color:#e9e9e9;transform:scaleX(0.9344);">Help</div>
<div class="t" style="left:32.3px;top:17.38px;font-size:7px;color:#e2e2e2;font-weight:bold;transform:scaleX(0.8702);">Session:</div>
<div class="t" style="left:59.0px;top:17.38px;font-size:7px;color:#e2e2e2;transform:scaleX(0.9305);">Office 60% Design Review</div>
<div class="t" style="left:142.5px;top:17.38px;font-size:7px;color:#e2e2e2;font-weight:bold;transform:scaleX(0.9632);">ID:</div>
<div class="t" style="left:152.5px;top:17.38px;font-size:7px;color:#e2e2e2;transform:scaleX(0.9571);">057-768-262</div>
<div class="t" style="left:196.5px;top:17.38px;font-size:7px;color:#e2e2e2;font-weight:bold;transform:scaleX(0.8642);">Name:</div>
<div class="t" style="left:216.5px;top:17.38px;font-size:7px;color:#e2e2e2;transform:scaleX(0.8822);">A1.1.1 - 1ST FLOOR PLAN - SOUTH</div>
<div class="t" style="left:325.0px;top:17.38px;font-size:7px;color:#e2e2e2;font-weight:bold;transform:scaleX(0.8707);">Pages:</div>
<div class="t" style="left:346.5px;top:17.38px;font-size:7px;color:#e2e2e2;transform:scaleX(0.7168);">1</div>
<div class="t" style="left:36.8px;top:37.08px;font-size:7px;color:#d6d6d6;transform:scaleX(0.8796);">A1.1.1 - 1ST FLOOR PLAN - SOUTH</div>
<div class="t" style="left:744.2px;top:37.01px;font-size:9.2px;color:#f0f0f0;font-weight:bold;transform:scaleX(0.8223);">Studio</div>
<div class="t" style="left:740.7px;top:55.98px;font-size:7px;color:#f0f0f0;font-weight:bold;transform:scaleX(0.8938);">Office 60% Design Review</div>
<div class="t" style="left:821.0px;top:55.98px;font-size:7px;color:#f0f0f0;font-weight:bold;transform:scaleX(0.9776);">- 057-768-262</div>
<div class="t" style="left:744.0px;top:72.98px;font-size:7px;color:#d8d8d8;transform:scaleX(0.9372);">My Status:</div>
<div class="t" style="left:755.0px;top:93.59px;font-size:7.6px;color:#e4e4e4;transform:scaleX(0.9941);">Attendees</div>
<div class="t" style="left:753.5px;top:111.88px;font-size:6.6px;color:#e4e4e4;">Taylor Davis</div>
<div class="t" style="left:858.5px;top:111.88px;font-size:6.6px;color:#e4e4e4;">A1.1.1 - 1ST FLOOR PLAN - SOUTH</div>
<div class="t" style="left:753.5px;top:126.38px;font-size:6.6px;color:#e4e4e4;">Amanda Leigh</div>
<div class="t" style="left:858.5px;top:126.38px;font-size:6.6px;color:#e4e4e4;">A1.1.1 - 1ST FLOOR PLAN - SOUTH</div>
<div class="t" style="left:753.5px;top:139.88px;font-size:6.6px;color:#e4e4e4;">Jacob Lake</div>
<div class="t" style="left:858.5px;top:139.88px;font-size:6.6px;color:#e4e4e4;">A1.1.1 - 1ST FLOOR PLAN - SOUTH</div>
<div class="t" style="left:755.0px;top:157.59px;font-size:7.6px;color:#e4e4e4;transform:scaleX(0.9109);">Documents</div>
<div class="t" style="left:753.5px;top:175.58px;font-size:6.8px;color:#e4e4e4;transform:scaleX(0.9142);">A1.1.1 - 1ST FLOOR PLAN - SOUTH.pdf</div>
<div class="t" style="left:753.5px;top:189.98px;font-size:6.8px;color:#e4e4e4;transform:scaleX(0.9164);">A1.1.2 - 1ST FLOOR PLAN - NORTH.pdf</div>
<div class="t" style="left:753.5px;top:204.38px;font-size:6.8px;color:#e4e4e4;transform:scaleX(0.9051);">A1.2.1 - 2ND FLOOR PLAN - SOUTH.pdf</div>
<div class="t" style="left:753.5px;top:218.98px;font-size:6.8px;color:#e4e4e4;transform:scaleX(0.9072);">A1.2.2 - 2ND FLOOR PLAN - NORTH.pdf</div>
<div class="t" style="left:774.0px;top:429.98px;font-size:7px;color:#f0f0f0;transform:scaleX(0.9744);">Record</div>
<div class="t" style="left:861.0px;top:429.98px;font-size:7px;color:#e4e4e4;transform:scaleX(1.0094);">Notifications</div>
<div class="t" style="left:739.3px;top:444.30px;font-size:4.5px;color:#c8c8c8;">1</div>
<div class="t" style="left:758.3px;top:443.39px;font-size:8.2px;color:#f0f0f0;font-weight:bold;transform:scaleX(0.8885);">Taylor D:</div>
<div class="t" style="left:792.7px;top:443.88px;font-size:6.6px;color:#e4e4e4;transform:scaleX(1.0015);">Joined Session</div>
<div class="t" style="left:739.3px;top:458.00px;font-size:4.5px;color:#c8c8c8;">2</div>
<div class="t" style="left:758.3px;top:457.09px;font-size:8.2px;color:#f0f0f0;font-weight:bold;transform:scaleX(0.8885);">Taylor D:</div>
<div class="t" style="left:792.7px;top:457.58px;font-size:6.6px;color:#e4e4e4;transform:scaleX(0.9464);">Added 'A1.2.1 - 2ND FLOOR PLAN - SOUTH.pdf'</div>
<div class="t" style="left:739.3px;top:471.00px;font-size:4.5px;color:#c8c8c8;">3</div>
<div class="t" style="left:758.3px;top:470.09px;font-size:8.2px;color:#f0f0f0;font-weight:bold;transform:scaleX(0.8885);">Taylor D:</div>
<div class="t" style="left:792.7px;top:470.58px;font-size:6.6px;color:#e4e4e4;transform:scaleX(0.9509);">Added 'A1.1.1 - 1ST FLOOR PLAN - SOUTH.pdf'</div>
<div class="t" style="left:739.3px;top:484.70px;font-size:4.5px;color:#c8c8c8;">4</div>
<div class="t" style="left:758.3px;top:483.79px;font-size:8.2px;color:#f0f0f0;font-weight:bold;transform:scaleX(0.8885);">Taylor D:</div>
<div class="t" style="left:792.7px;top:484.28px;font-size:6.6px;color:#e4e4e4;transform:scaleX(0.9482);">Added 'A1.2.2 - 2ND FLOOR PLAN - NORTH.pdf'</div>
<div class="t" style="left:739.3px;top:498.00px;font-size:4.5px;color:#c8c8c8;">5</div>
<div class="t" style="left:758.3px;top:497.09px;font-size:8.2px;color:#f0f0f0;font-weight:bold;transform:scaleX(0.8885);">Taylor D:</div>
<div class="t" style="left:792.7px;top:497.58px;font-size:6.6px;color:#e4e4e4;transform:scaleX(0.9527);">Added 'A1.1.2 - 1ST FLOOR PLAN - NORTH.pdf'</div>
<div class="t" style="left:740.7px;top:587.88px;font-size:7px;color:#e4e4e4;transform:scaleX(0.9664);">Chat</div>
<div class="t" style="left:316.0px;top:504.68px;font-size:6.6px;color:#e4e4e4;transform:scaleX(0.9492);">Sheet: A1.1.1 - 1ST FLOOR PLAN - SO... (1 of 1)</div>
<div class="t" style="left:628.0px;top:504.78px;font-size:6.6px;color:#6c6d70;transform:scaleX(1.1828);">1in = 8ft' in'</div>
<div class="t" style="left:679.0px;top:504.78px;font-size:6.8px;color:#e4e4e4;transform:scaleX(1.0667);">42.00 x 30.00 in</div>
<div class="t" style="left:22.7px;top:522.70px;font-size:9px;color:#f0f0f0;font-weight:bold;transform:scaleX(0.8808);">Markups List</div>
<div class="t" style="left:128.3px;top:523.78px;font-size:6.6px;color:#c8c8c8;transform:scaleX(0.9710);">Search</div>
<div class="t" style="left:34.4px;top:542.38px;font-size:6.6px;color:#f0f0f0;font-weight:bold;transform:scaleX(0.9359);">Subject</div>
<div class="t" style="left:134.1px;top:542.38px;font-size:6.6px;color:#f0f0f0;font-weight:bold;transform:scaleX(0.9561);">Page Label</div>
<div class="t" style="left:185.4px;top:542.38px;font-size:6.6px;color:#f0f0f0;font-weight:bold;transform:scaleX(0.9508);">Comments</div>
<div class="t" style="left:306.2px;top:542.38px;font-size:6.6px;color:#f0f0f0;font-weight:bold;transform:scaleX(0.9440);">Author</div>
<div class="t" style="left:357.8px;top:542.38px;font-size:6.6px;color:#f0f0f0;font-weight:bold;transform:scaleX(1.0632);">Date</div>
<div class="t" style="left:428.7px;top:542.38px;font-size:6.6px;color:#f0f0f0;font-weight:bold;transform:scaleX(0.9823);">Status</div>
<div class="t" style="left:497.5px;top:542.38px;font-size:6.6px;color:#f0f0f0;font-weight:bold;transform:scaleX(0.9292);">Color</div>
<div class="t" style="left:541.3px;top:542.38px;font-size:6.6px;color:#f0f0f0;font-weight:bold;transform:scaleX(0.9484);">Layer</div>
<div class="t" style="left:608.2px;top:542.38px;font-size:6.6px;color:#f0f0f0;font-weight:bold;transform:scaleX(0.9672);">Space</div>
<div class="t" style="left:34.4px;top:558.08px;font-size:6.8px;color:#f0f0f0;font-weight:bold;transform:scaleX(0.9165);">Engineer (2)</div>
<div class="t" style="left:60.6px;top:569.68px;font-size:6.8px;color:#e4e4e4;transform:scaleX(0.9626);">Engineer</div>
<div class="t" style="left:131.0px;top:569.78px;font-size:6.6px;color:#e4e4e4;transform:scaleX(0.9758);">Sheet: A1.1.1 ...</div>
<div class="t" style="left:303.9px;top:569.78px;font-size:6.6px;color:#e4e4e4;transform:scaleX(0.9354);">Taylor Davis</div>
<div class="t" style="left:60.6px;top:581.28px;font-size:6.8px;color:#e4e4e4;transform:scaleX(0.9626);">Engineer</div>
<div class="t" style="left:131.0px;top:581.38px;font-size:6.6px;color:#e4e4e4;transform:scaleX(0.9758);">Sheet: A1.1.1 ...</div>
<div class="t" style="left:303.9px;top:581.38px;font-size:6.6px;color:#e4e4e4;transform:scaleX(0.9354);">Taylor Davis</div>
<div class="t" style="left:182.6px;top:569.78px;font-size:6.6px;color:#e4e4e4;transform:scaleX(0.9857);">4'-10 1/2"</div>
<div class="t" style="left:355.0px;top:569.78px;font-size:6.6px;color:#e4e4e4;transform:scaleX(1.0209);">2/19/2022 11:48:19 ...</div>
<div class="t" style="left:355.0px;top:581.38px;font-size:6.6px;color:#e4e4e4;transform:scaleX(1.0209);">2/19/2022 11:48:53 ...</div>
<div class="t" style="left:605.0px;top:569.78px;font-size:6.6px;color:#e4e4e4;transform:scaleX(0.9474);">WOMEN 126</div>
</div></body></html>
